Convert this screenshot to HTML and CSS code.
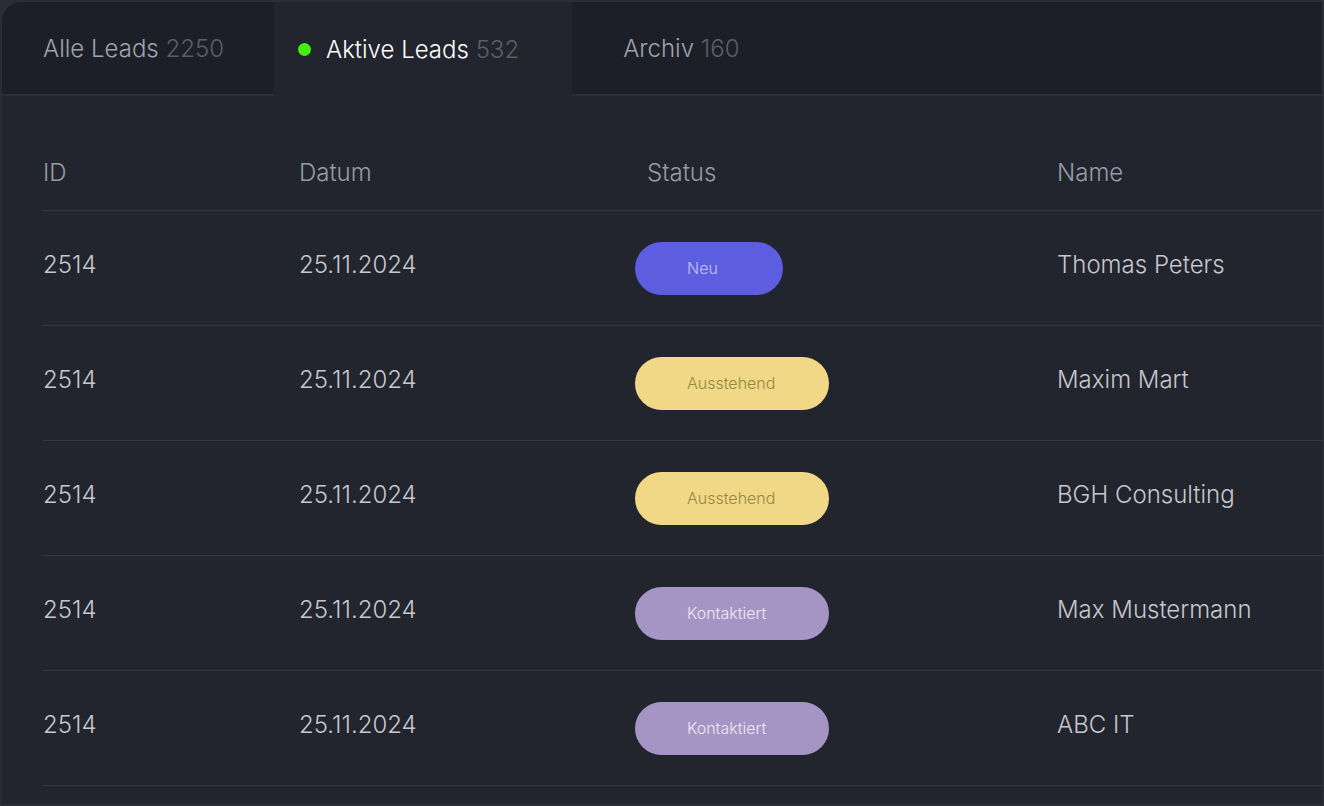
FILE: index.html
```html
<!DOCTYPE html>
<html lang="de">
<head>
<meta charset="utf-8">
<title>Leads</title>
<link rel="stylesheet" href="styles.css">
</head>
<body>
<div class="card">
  <div class="tabs">
    <div class="tab first">Alle Leads <span class="count">2250</span></div>
    <div class="tab active"><span class="dot"></span>Aktive Leads <span class="count">532</span></div>
    <div class="tab">Archiv <span class="count">160</span></div>
  </div>
  <div class="table">
    <div class="row head">
      <div>ID</div><div>Datum</div><div class="status-h">Status</div><div>Name</div>
    </div>
    <div class="row">
      <div>2514</div><div>25.11.2024</div><div><span class="badge neu">Neu</span></div><div>Thomas Peters</div>
    </div>
    <div class="row">
      <div>2514</div><div>25.11.2024</div><div><span class="badge aus">Ausstehend</span></div><div>Maxim Mart</div>
    </div>
    <div class="row">
      <div>2514</div><div>25.11.2024</div><div><span class="badge aus">Ausstehend</span></div><div>BGH Consulting</div>
    </div>
    <div class="row">
      <div>2514</div><div>25.11.2024</div><div><span class="badge kon">Kontaktiert</span></div><div>Max Mustermann</div>
    </div>
    <div class="row">
      <div>2514</div><div>25.11.2024</div><div><span class="badge kon">Kontaktiert</span></div><div>ABC IT</div>
    </div>
  </div>
</div>
</body>
</html>
```
FILE: styles.css
```css
html, body {
  margin: 0;
  padding: 0;
  background: #2a2c36;
  font-family: Inter, "Noto Sans", "Liberation Sans", sans-serif;
}
body {
  padding: 2px;
  width: 1324px;
  height: 806px;
  box-sizing: border-box;
  overflow: hidden;
}
.card {
  width: 1320px;
  height: 802px;
  background: #22242e;
  border-top-left-radius: 20px;
  overflow: hidden;
}
.tabs {
  display: flex;
  height: 92px;
  background: #1d1f28;
  border-bottom: 2px solid #2b2e39;
}
.tab {
  display: flex;
  align-items: center;
  padding: 0 50px 0 51px;
  font-size: 24px;
  font-weight: 350;
  color: #a0a2ad;
  white-space: pre;
}
.tab.first {
  padding-left: 41px;
}
.tab.active {
  background: #22242e;
  color: #ffffff;
  margin-bottom: -2px;
  height: 94px;
  padding-left: 24px;
  padding-right: 53px;
}
.count {
  color: #5c5e66;
}
.dot {
  width: 13px;
  height: 13px;
  border-radius: 50%;
  background: #44ee11;
  margin-right: 15px;
}
.table {
  padding-left: 41px;
}
.row {
  display: grid;
  grid-template-columns: 256px 336px 422px 1fr;
  align-items: center;
  height: 115px;
  box-sizing: border-box;
  padding-bottom: 7px;
  border-bottom: 1px solid #34374a;
  font-size: 24px;
  font-weight: 350;
  color: #c6c7cd;
}
.row.head {
  color: #999ba6;
  padding-top: 38px;
  padding-bottom: 0;
}
.status-h {
  padding-left: 12px;
}
.badge {
  display: inline-flex;
  align-items: center;
  box-sizing: border-box;
  padding-left: 52px;
  height: 53px;
  border-radius: 27px;
  font-size: 16px;
  font-weight: 350;
  margin-top: 7px;
}
.neu {
  width: 148px;
  background: #5d5ddf;
  color: #c4c2f2;
}
.aus {
  width: 194px;
  background: #f0d887;
  color: #978740;
}
.kon {
  width: 194px;
  background: #a595c5;
  color: #ede7f5;
}
```
